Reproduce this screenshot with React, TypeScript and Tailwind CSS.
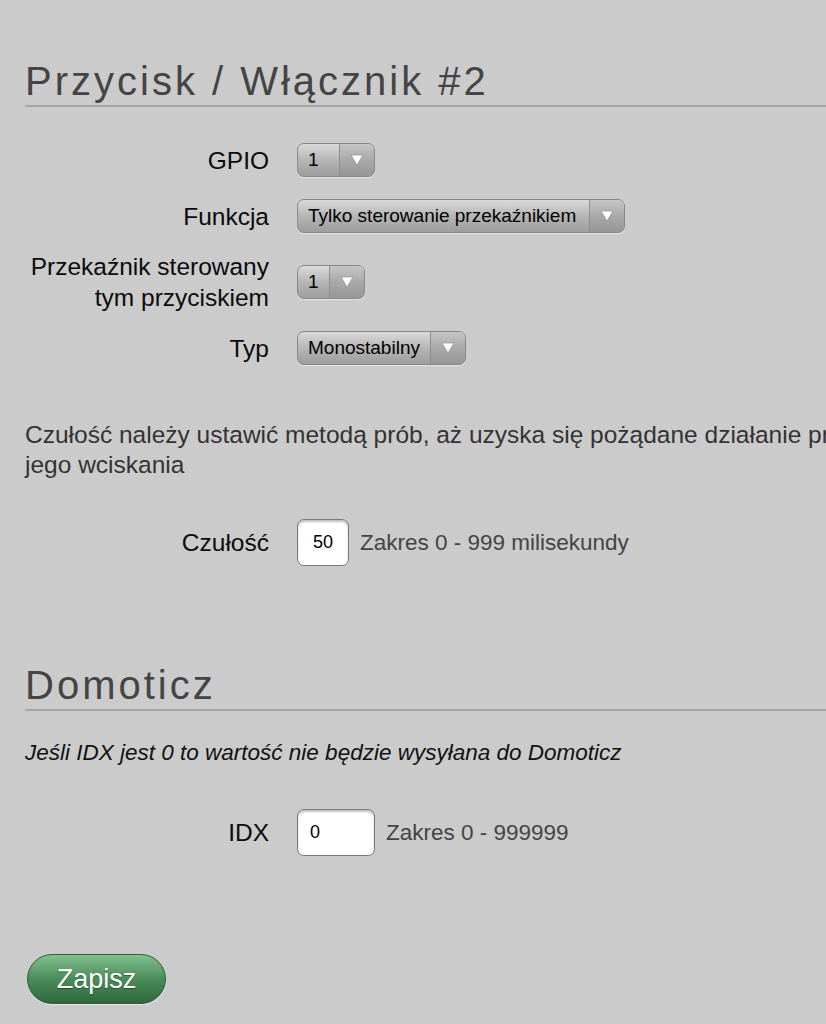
import React from "react";

function Arrow() {
  return (
    <svg width="14" height="12" viewBox="0 0 14 12" className="block">
      <path d="M1 1 L13 1 L7 11 Z" fill="#ffffff" stroke="#8f8f8f" strokeWidth="0.7" strokeLinejoin="round" />
    </svg>
  );
}

function Select({ value, w }: { value: string; w: string }) {
  return (
    <div
      className={`flex h-[34px] ${w} rounded-[7px] border border-[#878787] bg-gradient-to-b from-[#dadada] via-[#b6b6b6] to-[#9d9d9d] shadow-[0_1px_1px_rgba(255,255,255,0.5)] overflow-hidden`}
    >
      <div className="flex-1 flex items-center pl-[10px] text-[19px] text-black whitespace-nowrap">{value}</div>
      <div className="flex w-[35px] items-center justify-center border-l border-[#8e8e8e] bg-gradient-to-b from-[#c6c6c6] via-[#a9a9a9] to-[#969696]">
        <Arrow />
      </div>
    </div>
  );
}

function Row({ label, children }: { label: React.ReactNode; children: React.ReactNode }) {
  return (
    <div className="flex items-center">
      <div className="w-[269px] shrink-0 text-right text-[24.5px] leading-[31px] text-[#0a0a0a]">{label}</div>
      <div className="ml-[28px] flex items-center">{children}</div>
    </div>
  );
}

export default function App() {
  return (
    <div
      className="w-[826px] h-[1024px] overflow-hidden bg-[#cbcbcb]"
      style={{ fontFamily: '"Liberation Sans", Arial, sans-serif' }}
    >
      <div className="pl-[25px] pt-[58px]">
        <h1 className="text-[40px] leading-[46px] tracking-[3px] text-[#444] font-normal whitespace-nowrap">Przycisk / Włącznik #2</h1>
        <div className="h-[2px] bg-[#a6a6a6] mt-[1px]" />
      </div>

      <div className="mt-[36px] flex flex-col">
        <Row label="GPIO">
          <Select value="1" w="w-[78px]" />
        </Row>
        <div className="h-[22px]" />
        <Row label="Funkcja">
          <Select value="Tylko sterowanie przekaźnikiem" w="w-[328px]" />
        </Row>
        <div className="h-[18px]" />
        <Row label={<>Przekaźnik sterowany<br />tym przyciskiem</>}>
          <Select value="1" w="w-[68px]" />
        </Row>
        <div className="h-[18px]" />
        <Row label="Typ">
          <Select value="Monostabilny" w="w-[169px]" />
        </Row>
      </div>

      <p className="pl-[25px] mt-[55px] whitespace-nowrap text-[24.5px] leading-[30px] text-[#333]">
        Czułość należy ustawić metodą prób, aż uzyska się pożądane działanie przycisku podczas
        <br />
        jego wciskania
      </p>

      <div className="mt-[39px]">
        <Row label="Czułość">
          <div className="flex h-[47px] w-[52px] items-center justify-center rounded-[7px] border border-[#7a7a7a] bg-white text-[18px] text-black shadow-[inset_0_2px_2px_rgba(0,0,0,0.25)]">
            50
          </div>
          <span className="ml-[11px] text-[22.5px] text-[#444]">Zakres 0 - 999 milisekundy</span>
        </Row>
      </div>

      <div className="pl-[25px] mt-[96px]">
        <h2 className="text-[40px] leading-[46px] tracking-[3px] text-[#444] font-normal">Domoticz</h2>
        <div className="h-[2px] bg-[#a6a6a6] mt-[1px]" />
      </div>

      <p className="pl-[25px] mt-[27px] text-[22.5px] leading-[30px] italic text-[#111] whitespace-nowrap">
        Jeśli IDX jest 0 to wartość nie będzie wysyłana do Domoticz
      </p>

      <div className="mt-[41px]">
        <Row label="IDX">
          <div className="flex h-[47px] w-[78px] items-center pl-[12px] rounded-[7px] border border-[#7a7a7a] bg-white text-[18px] text-black shadow-[inset_0_2px_2px_rgba(0,0,0,0.25)]">
            0
          </div>
          <span className="ml-[11px] text-[22.5px] text-[#444]">Zakres 0 - 999999</span>
        </Row>
      </div>

      <div className="pl-[27px] mt-[98px]">
        <button className="h-[50px] w-[139px] rounded-full border border-[#2b5f37] bg-gradient-to-b from-[#82c08f] via-[#4a8d5a] to-[#2d683c] text-[27px] text-white shadow-[0_1px_1px_rgba(255,255,255,0.6)] [text-shadow:0_1px_1px_rgba(0,0,0,0.4)]">
          Zapisz
        </button>
      </div>
    </div>
  );
}
